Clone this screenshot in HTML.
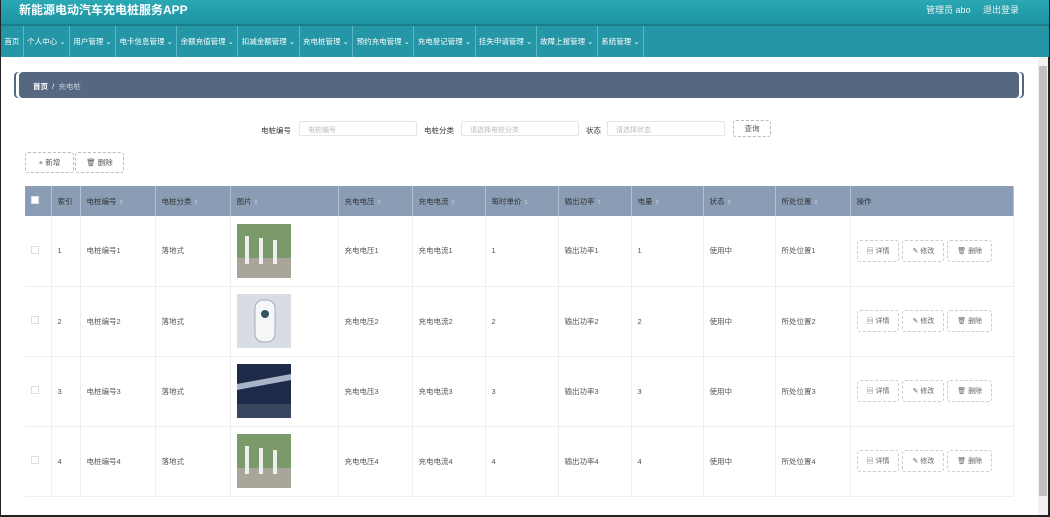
<!DOCTYPE html><html><head><meta charset="utf-8"><style>
*{box-sizing:border-box;margin:0;padding:0}
html{width:1050px;height:517px;overflow:hidden}
body{width:1050px;height:517px;overflow:hidden;background:#fff;font-family:"Liberation Sans","Noto Sans CJK SC",sans-serif;font-size:8px;color:#555;position:relative;border-left:1px solid #222;border-right:2px solid #222;border-bottom:2px solid #222}
.hd{position:absolute;left:0;top:0;width:1048px;height:24px;background:linear-gradient(#2aa8b4,#1e93a2);color:#fff}
.hd .t{position:absolute;left:18px;top:1px;font-size:12px;font-weight:bold}
.hd .r{position:absolute;right:30px;top:3px;font-size:9px;color:#e8f4f6}
.nav{position:absolute;left:0;top:24px;width:1048px;height:33px;background:#2596a6;border-top:2px solid #1a7d8a;display:flex}
.nav div{color:#fff;font-size:7.5px;padding:0 3.4px;line-height:31px;border-right:1px solid #5bb7c3;white-space:nowrap}
.bc{position:absolute;left:18px;top:72px;width:1000px;height:26px;background:#566782;border-radius:4px;color:#fff;font-size:7.5px;padding:9px 14px;box-shadow:-3px 0 0 #fff,-5px 0 0 #566782,3px 0 0 #fff,5px 0 0 #566782}
.bc span{color:#c8d0dc}
.in{position:absolute;height:15px;border:1px solid #e5e5e5;border-radius:2px;color:#bbb;font-size:7px;padding:3px 8px}
.lb{position:absolute;font-size:7.5px;color:#333}
.btn{position:absolute;border:1px dashed #bbb;border-radius:3px;font-size:7.5px;color:#555;text-align:center}
.tw{position:absolute;left:24px;top:186px;width:989px;height:311px;overflow:hidden}
table{border-collapse:collapse;width:989px}
th{background:#8a9db5;color:#333;font-weight:normal;height:30px;text-align:left;padding-left:6px;border-right:1px solid #b3c1d1;font-size:7.5px}
td{height:70px;border-right:1px solid #eee;border-bottom:1px solid #eee;padding-left:6px;font-size:7.5px;color:#555}
th i{color:#c0cad6;font-style:normal;font-size:6px}
.pic{width:54px;height:54px;display:block}
.op{display:inline-block;border:1px dashed #ccc;border-radius:3px;padding:5px 9px;margin-right:3px;font-size:7px;color:#666}
.cb{width:8px;height:8px;border:1px solid #ddd;display:inline-block;background:#fff}
.sb{position:absolute;left:1037px;top:58px;width:10px;height:457px;background:#f1f1f1}
.sb div{position:absolute;left:1px;top:8px;width:8px;height:430px;background:#c1c1c1}
</style></head><body>
<div class="hd"><div class="t">新能源电动汽车充电桩服务APP</div><div class="r">管理员 abo &nbsp;&nbsp;&nbsp; 退出登录</div></div>
<div class="nav"><div>首页</div><div>个人中心 ⌄</div><div>用户管理 ⌄</div><div>电卡信息管理 ⌄</div><div>余额充值管理 ⌄</div><div>扣减金额管理 ⌄</div><div>充电桩管理 ⌄</div><div>预约充电管理 ⌄</div><div>充电登记管理 ⌄</div><div>挂失申请管理 ⌄</div><div>故障上报管理 ⌄</div><div>系统管理 ⌄</div></div>
<div class="bc"><b>首页</b> &nbsp;/&nbsp; <span>充电桩</span></div>
<div class="lb" style="left:260px;top:125px">电桩编号</div><div class="in" style="left:298px;top:121px;width:118px">电桩编号</div>
<div class="lb" style="left:423px;top:125px">电桩分类</div><div class="in" style="left:460px;top:121px;width:118px">请选择电桩分类</div>
<div class="lb" style="left:585px;top:125px">状态</div><div class="in" style="left:606px;top:121px;width:118px">请选择状态</div>
<div class="btn" style="left:732px;top:120px;width:38px;height:17px;line-height:15px">查询</div>
<div class="btn" style="left:24px;top:152px;width:49px;height:21px;line-height:19px">+ 新增</div>
<div class="btn" style="left:74px;top:152px;width:49px;height:21px;line-height:19px">🗑 删除</div>
<div class="tw"><table>
<tr><th style="width:26px"><span class="cb"></span></th><th style="width:29px">索引</th><th style="width:75px">电桩编号 <i>⇕</i></th><th style="width:75px">电桩分类 <i>⇕</i></th><th style="width:108px">图片 <i>⇕</i></th><th style="width:74px">充电电压 <i>⇕</i></th><th style="width:73px">充电电流 <i>⇕</i></th><th style="width:73px">每时单价 <i>⇕</i></th><th style="width:73px">输出功率 <i>⇕</i></th><th style="width:72px">电量 <i>⇕</i></th><th style="width:72px">状态 <i>⇕</i></th><th style="width:75px">所处位置 <i>⇕</i></th><th>操作</th></tr>
<tr><td><span class="cb"></span></td><td>1</td><td>电桩编号1</td><td>落地式</td><td><svg class="pic"><rect width="54" height="54" fill="#7a9a6a"/><rect y="34" width="54" height="20" fill="#a9a59a"/><rect x="8" y="12" width="4" height="28" fill="#eee"/><rect x="22" y="14" width="4" height="26" fill="#eee"/><rect x="36" y="16" width="4" height="24" fill="#eee"/></svg></td><td>充电电压1</td><td>充电电流1</td><td>1</td><td>输出功率1</td><td>1</td><td>使用中</td><td>所处位置1</td><td><span class="op">▤ 详情</span><span class="op">✎ 修改</span><span class="op">🗑 删除</span></td></tr>
<tr><td><span class="cb"></span></td><td>2</td><td>电桩编号2</td><td>落地式</td><td><svg class="pic"><rect width="54" height="54" fill="#d8dde3"/><rect x="18" y="6" width="20" height="42" rx="8" fill="#f4f6f8" stroke="#aab"/><circle cx="28" cy="20" r="4" fill="#356"/></svg></td><td>充电电压2</td><td>充电电流2</td><td>2</td><td>输出功率2</td><td>2</td><td>使用中</td><td>所处位置2</td><td><span class="op">▤ 详情</span><span class="op">✎ 修改</span><span class="op">🗑 删除</span></td></tr>
<tr><td><span class="cb"></span></td><td>3</td><td>电桩编号3</td><td>落地式</td><td><svg class="pic"><rect width="54" height="54" fill="#1e2a4a"/><path d="M0 20 L54 10 L54 16 L0 26Z" fill="#aab4c8"/><rect y="40" width="54" height="14" fill="#3a4660"/></svg></td><td>充电电压3</td><td>充电电流3</td><td>3</td><td>输出功率3</td><td>3</td><td>使用中</td><td>所处位置3</td><td><span class="op">▤ 详情</span><span class="op">✎ 修改</span><span class="op">🗑 删除</span></td></tr>
<tr><td><span class="cb"></span></td><td>4</td><td>电桩编号4</td><td>落地式</td><td><svg class="pic"><rect width="54" height="54" fill="#7a9a6a"/><rect y="34" width="54" height="20" fill="#a9a59a"/><rect x="8" y="12" width="4" height="28" fill="#eee"/><rect x="22" y="14" width="4" height="26" fill="#eee"/><rect x="36" y="16" width="4" height="24" fill="#eee"/></svg></td><td>充电电压4</td><td>充电电流4</td><td>4</td><td>输出功率4</td><td>4</td><td>使用中</td><td>所处位置4</td><td><span class="op">▤ 详情</span><span class="op">✎ 修改</span><span class="op">🗑 删除</span></td></tr>
</table></div>
<div class="sb"><div></div></div>
</body></html>
